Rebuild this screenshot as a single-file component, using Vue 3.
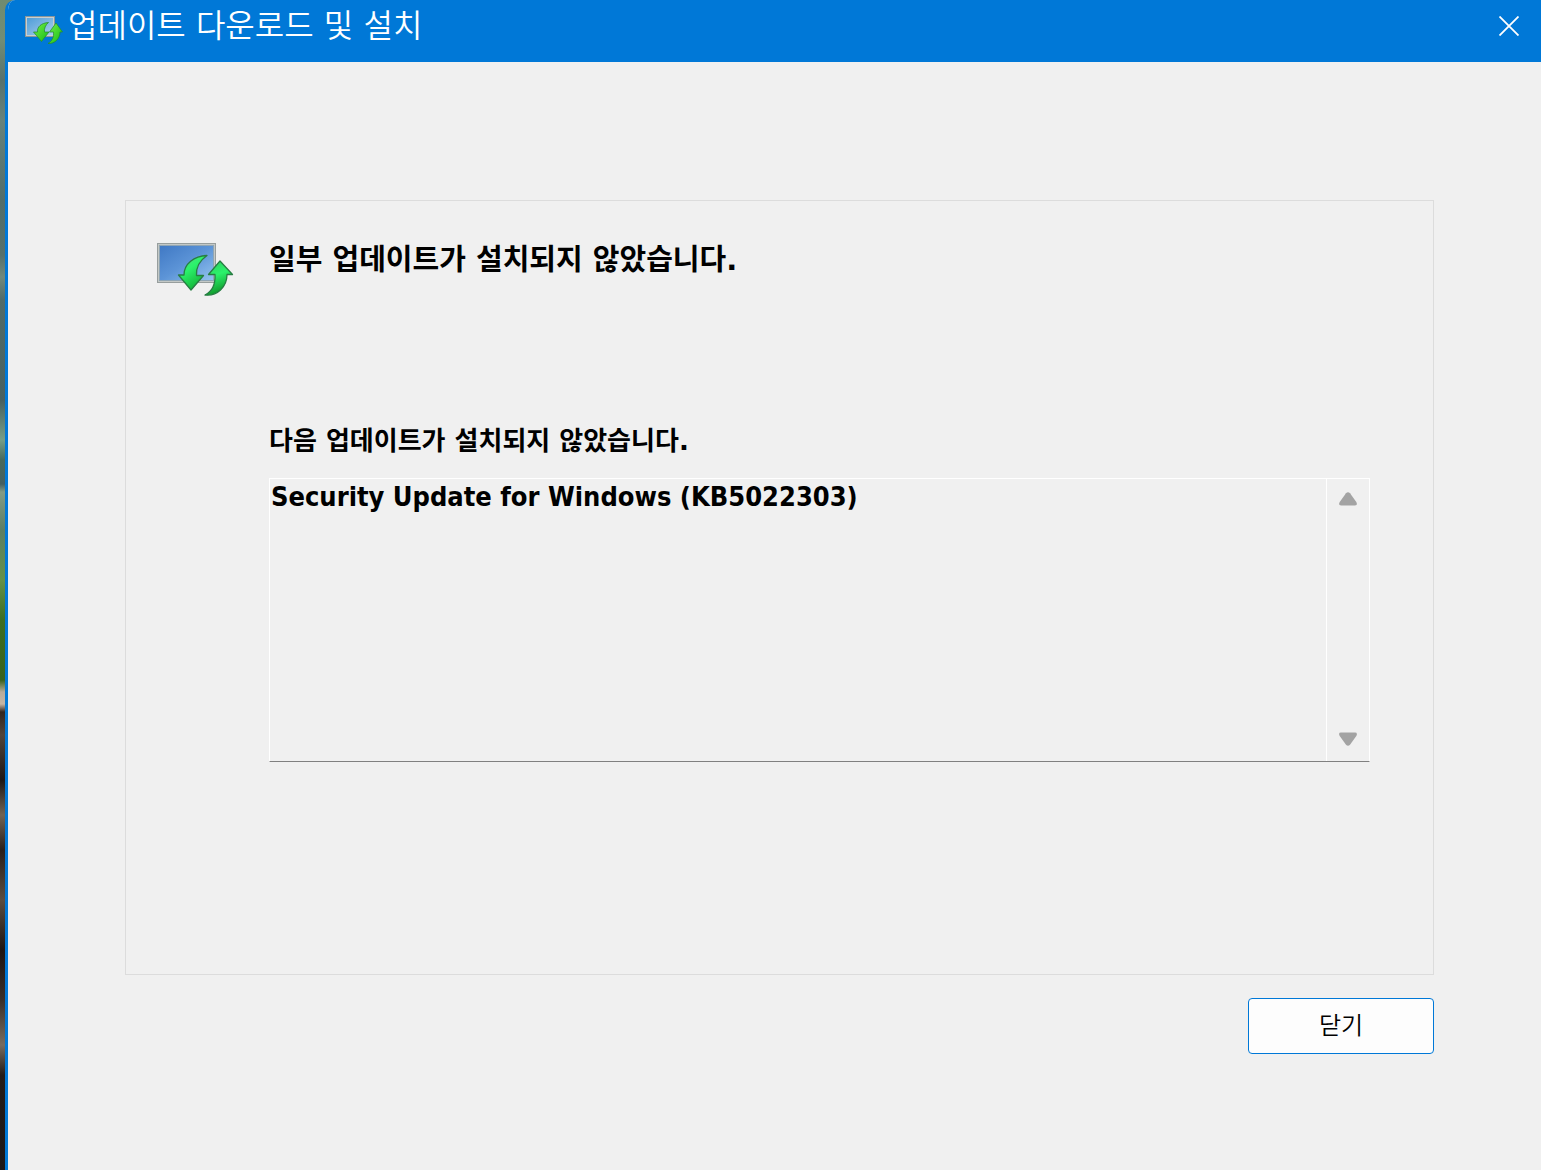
<script setup>
const updates = ['Security Update for Windows (KB5022303)']
</script>

<template>
  <div class="desktop">
    <section class="window" role="dialog" aria-labelledby="window-title">
      <header class="titlebar">
        <svg class="app-icon" viewBox="0 0 78 56" aria-hidden="true">
          <defs>
            <linearGradient id="small-screen" x1="0" y1="0" x2="1" y2="1">
              <stop offset="0" stop-color="#4f9dd8" />
              <stop offset="1" stop-color="#a9cfec" />
            </linearGradient>
            <linearGradient id="small-arrow" x1="0" y1="0" x2="1" y2="1">
              <stop offset="0" stop-color="#7af04a" />
              <stop offset="1" stop-color="#12bd14" />
            </linearGradient>
          </defs>
          <rect x="3" y="1" width="58" height="40" fill="#c9cfd0" stroke="#8b9698" stroke-width="2" />
          <rect x="6" y="4" width="52" height="34" fill="url(#small-screen)" />
          <path d="M49 13C34 14 26 22 27 32H19L35 51L50 32H41C40 25 43 18 49 13Z" fill="url(#small-arrow)" stroke="#258a32" stroke-width="1.5" stroke-linejoin="round" />
          <path d="M64 14L77 32H72C72 45 62 56 48 55C56 50 60 43 59 32H51Z" fill="url(#small-arrow)" stroke="#258a32" stroke-width="1.5" stroke-linejoin="round" />
        </svg>
        <h1 id="window-title">업데이트 다운로드 및 설치</h1>
        <button class="window-close" type="button" aria-label="닫기">
          <svg viewBox="0 0 20 20" aria-hidden="true"><path d="M0.5 0.5L19.5 19.5M19.5 0.5L0.5 19.5" stroke="#fff" stroke-width="1.8" /></svg>
        </button>
      </header>

      <main class="body">
        <div class="panel">
          <svg class="update-icon" viewBox="0 0 78 56" aria-hidden="true">
            <defs>
              <linearGradient id="screen" x1="0" y1="0" x2="1" y2="1">
                <stop offset="0" stop-color="#3f78c4" />
                <stop offset="0.5" stop-color="#5c94d7" />
                <stop offset="1" stop-color="#94c4ef" />
              </linearGradient>
              <linearGradient id="arrow-down" x1="0" y1="0" x2="0.6" y2="1">
                <stop offset="0" stop-color="#5fd488" />
                <stop offset="0.45" stop-color="#2bf26b" />
                <stop offset="1" stop-color="#12b034" />
              </linearGradient>
              <linearGradient id="arrow-up" x1="0.3" y1="0" x2="0.6" y2="1">
                <stop offset="0" stop-color="#2fd060" />
                <stop offset="0.4" stop-color="#2bf26b" />
                <stop offset="1" stop-color="#0b8a20" />
              </linearGradient>
            </defs>
            <rect x="0.5" y="1.5" width="58" height="39" fill="#c3c8c6" stroke="#979e9d" />
            <rect x="2.5" y="3.5" width="54" height="35" fill="url(#screen)" stroke="#8fa5b5" />
            <path d="M50 13.5C37 14 27 22 27 33H21.5L34 48L46.5 33.5H39.5C39 26 42 19 50 13.5Z" fill="url(#arrow-down)" stroke="#277e43" stroke-width="1.3" stroke-linejoin="round" />
            <path d="M63 19L75.5 32.5H70C70 45 60 54.5 48 53C56 49 58.5 42 58 32.5H51.5Z" fill="url(#arrow-up)" stroke="#277e43" stroke-width="1.3" stroke-linejoin="round" />
          </svg>
          <div class="content">
            <h2>일부 업데이트가 설치되지 않았습니다.</h2>
            <h3 id="list-label">다음 업데이트가 설치되지 않았습니다.</h3>
            <div class="list-box">
              <ul aria-labelledby="list-label">
                <li v-for="update in updates" :key="update">{{ update }}</li>
              </ul>
              <div class="scrollbar">
                <button type="button" aria-label="위로 스크롤" disabled>
                  <svg viewBox="0 0 18 14" aria-hidden="true"><path d="M7 1.2Q9-.8 11 1.2L17.3 10Q19 13.5 16 13.5H2Q-1 13.5.7 10Z" /></svg>
                </button>
                <button type="button" aria-label="아래로 스크롤" disabled>
                  <svg viewBox="0 0 18 14" aria-hidden="true"><path d="M7 12.8Q9 14.8 11 12.8L17.3 4Q19 .5 16 .5H2Q-1 .5.7 4Z" /></svg>
                </button>
              </div>
            </div>
          </div>
        </div>
        <button class="close-button" type="button">닫기</button>
      </main>
    </section>
  </div>
</template>

<style>
body {
  margin: 0;
}
</style>

<style scoped>
* {
  box-sizing: border-box;
}

.desktop {
  display: flex;
  min-height: 100vh;
  padding-left: 5px;
  font-family: "DejaVu Sans", "Noto Sans CJK KR", sans-serif;
  color: #000;
  background: linear-gradient(
    #6f8b70 0,
    #718d76 40px,
    #58716c 80px,
    #67827b 120px,
    #526d69 200px,
    #55706b 255px,
    #71897c 277px,
    #516b69 300px,
    #49605f 400px,
    #769e86 440px,
    #48695c 460px,
    #455f60 484px,
    #839b85 492px,
    #5c7e63 530px,
    #649148 580px,
    #3d6e22 620px,
    #39621d 680px,
    #b9ab9a 692px,
    #c5b5a4 704px,
    #33261f 712px,
    #51443a 735px,
    #1f1815 780px,
    #716354 815px,
    #2a201b 850px,
    #5b4d40 900px,
    #1e1512 950px,
    #3b3029 1000px,
    #776b5f 1045px,
    #251c18 1075px,
    #1b1718 1170px
  );
}

.window {
  display: flex;
  flex: 1;
  flex-direction: column;
  min-width: 0;
  border-left: 3px solid #0078d7;
  border-top-left-radius: 10px;
  background: #f0f0f0;
  overflow: hidden;
}

.titlebar {
  display: flex;
  align-items: center;
  height: 62px;
  padding: 0 22px 10px 16px;
  color: #fff;
  background: #0078d7;
}

.app-icon {
  width: 39px;
  height: 28px;
  margin-top: 8px;
}

h1,
h2,
h3 {
  margin: 0;
}

h1 {
  flex: 1;
  margin-left: 5px;
  font-size: 32px;
  font-weight: 350;
  line-height: 54px;
}

.window-close {
  display: flex;
  padding: 0;
  border: 0;
  background: none;
}

.window-close svg {
  width: 20px;
  height: 20px;
}

.body {
  display: flex;
  flex: 1;
  flex-direction: column;
  gap: 23px;
  padding: 138px 107px 116px 117px;
}

.panel {
  display: flex;
  flex: 1;
  gap: 34px;
  padding: 32px 63px 0 31px;
  border: 1px solid #dcdcdc;
}

.update-icon {
  flex: none;
  width: 78px;
  height: 56px;
  margin-top: 9px;
}

.content {
  flex: 1;
  min-width: 0;
}

h2 {
  font-size: 29px;
  line-height: 54px;
}

h3 {
  margin-top: 134px;
  font-size: 26px;
  line-height: 40px;
}

.list-box {
  display: flex;
  height: 284px;
  margin-top: 17px;
  border: 1px solid #fff;
  border-bottom-color: #808080;
}

ul {
  flex: 1;
  margin: 0;
  padding: 0 1px;
  list-style: none;
  font-family: "DejaVu Sans Condensed", "DejaVu Sans", sans-serif;
  font-size: 27px;
  font-weight: 700;
  line-height: 36px;
}

.scrollbar {
  display: flex;
  flex-direction: column;
  justify-content: space-between;
  width: 43px;
  border-left: 1px solid #fff;
}

.scrollbar button {
  display: flex;
  align-items: center;
  justify-content: center;
  height: 40px;
  padding: 0;
  border: 0;
  background: none;
}

.scrollbar button:last-child {
  height: 44px;
}

.scrollbar svg {
  width: 18px;
  height: 14px;
  fill: #a3a3a3;
}

.close-button {
  align-self: flex-end;
  width: 186px;
  height: 56px;
  padding: 0;
  border: 1px solid #0078d7;
  border-radius: 4px;
  font-family: inherit;
  font-size: 24px;
  font-weight: 350;
  line-height: 54px;
  color: #000;
  background: #fdfdfd;
}
</style>
